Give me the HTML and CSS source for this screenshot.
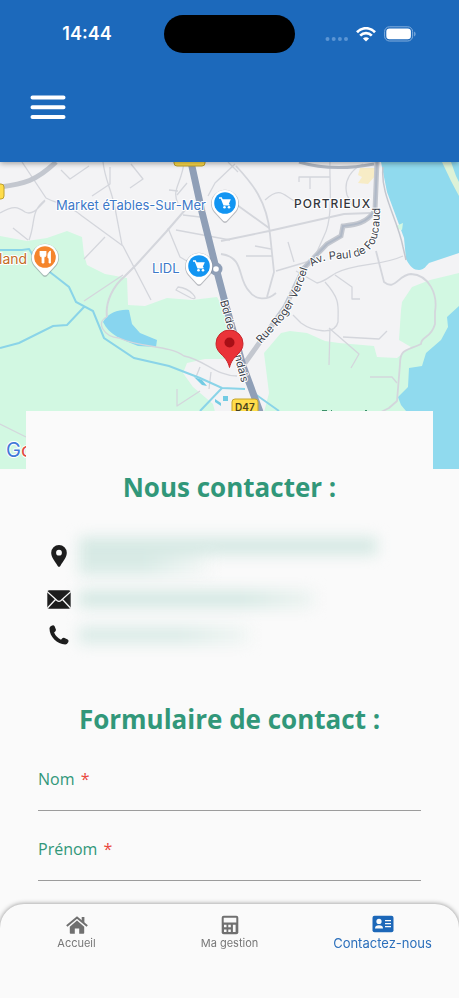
FILE: index.html
```html
<!DOCTYPE html>
<html lang="fr">
<head>
<meta charset="utf-8">
<meta name="viewport" content="width=device-width, initial-scale=1">
<title>Contactez-nous</title>
<link rel="stylesheet" href="styles.css">
</head>
<body>
<header class="header">
  <div class="status">
    <span class="time">14:44</span>
    <span class="island"></span>
    <span class="status-icons">
      <svg width="24" height="6" viewBox="0 0 24 6" fill="#5b95d4" aria-hidden="true"><circle cx="2.500" cy="3" r="2"/><circle cx="8.700" cy="3" r="2"/><circle cx="14.900" cy="3" r="2"/><circle cx="21" cy="3" r="2"/></svg>
      <svg class="wifi" width="20" height="15" viewBox="0 0 20 15" fill="none" stroke="#fff" stroke-width="2.700" aria-hidden="true"><path d="M1 5.200C6-.1 14-.1 19 5.200"/><path d="M4.200 8.600C7.500 5.300 12.500 5.300 15.800 8.600"/><path d="M10 14.600 6.900 11.400C8.600 9.800 11.400 9.800 13.100 11.400Z" fill="#fff" stroke="none"/></svg>
      <svg width="32" height="16" viewBox="0 0 32 16" aria-hidden="true"><rect x=".6" y=".8" width="28" height="14.200" rx="4.800" fill="none" stroke="#82aedd"/><rect x="2.300" y="2.500" width="24.600" height="10.800" rx="3.300" fill="#fff"/><path d="M30.200 5.500v5c1.800-.8 1.800-4.200 0-5Z" fill="#82aedd"/></svg>
    </span>
  </div>
  <button class="menu" type="button" aria-label="Menu">
    <svg width="36" height="26" viewBox="0 0 36 26" stroke="#fff" stroke-width="4" stroke-linecap="round"><path d="M2.500 3.500h31M2.500 13.200h31M2.500 23h31"/></svg>
  </button>
</header>

<main>
  <svg class="map" viewBox="0 162 459 307" preserveAspectRatio="xMidYMid slice" role="img" aria-label="Carte">
    <defs>
      <path id="p-bd" d="M220 301 Q227 326 232 346 T245 396"/>
      <path id="p-vercel" d="M261 344 L281 322 Q298 302 309 264"/>
      <path id="p-foucaud" d="M312 267 C325 256 344 261 359 256 C376 249 380 238 380 206"/>
      <g id="badge">
        <path d="M0 20Q-1.500 20-3 18L-9 11.500A14 14 0 1 1 9 11.500L3 18Q1.500 20 0 20Z" fill="#70767e" opacity=".45"/>
        <path d="M0 18.500Q-1.500 18.500-3 16.500L-8.500 10.500A13.300 13.300 0 1 1 8.500 10.500L3 16.500Q1.500 18.500 0 18.500Z" fill="#fff"/>
      </g>
      <g id="cart" fill="none" stroke="#fff" stroke-width="1.500">
        <circle r="10.800" fill="#1295f2" stroke="none"/>
        <path d="M-6-5h2.300l2.700 6.700h5.500"/><path d="M-3.300-3.800H5.800L3.800 1H-1.300Z" fill="#fff" stroke="none"/>
        <circle cx="-.5" cy="4.200" r="1.300" fill="#fff" stroke="none"/><circle cx="4" cy="4.200" r="1.300" fill="#fff" stroke="none"/>
      </g>
    </defs>
    <rect y="162" width="459" height="307" fill="#f3f3f5"/>
    <g fill="#d2f8e2">
      <path d="M0 236 27 241 47 238 67 231 82 237 84 255 87 265 105 274 127 278 128 305 145 306 167 298 192 300 217 297 223 308 231 340 231 359 205 359 187 363 183 373 193 387 213 404 215 412V469H0Z"/>
      <path d="M281 333 290 331 307 333 325 341 339 343 374 346 377 357 397 358 411 347 399 340 401 310 402 302 412 287 430 280 459 273V420H262L269 393 264 353Z"/>
    </g>
    <path d="M360 168h16v7l-8 9-10-1 4-6-4-2z" fill="#f7ecc6"/>
    <g fill="#90daee">
      <path d="M381 162 387 192 404 238 406 259C410 267 414 270 419 270 424 270 426 266 429 263L459 253V162Z"/>
      <path d="M459 306 447 317 448 327 441 340 426 353 422 366 409 368 408 387 398 397 401 405 406 411V469H459Z"/>
      <path d="M103 322C108 312 121 309 129 310L132 324 140 333 157 340 156 347 138 346C123 340 109 335 103 322Z" fill="#88d5ef"/>
    </g>
    <path d="M442 162h9l5 14 3 6v14l-8-15z" fill="#ddf2d7"/><path d="M396 226l7-3-1 7-4-1z" fill="#d2f8e2"/>
    <g fill="none" stroke="#d4d6dc" stroke-width="1.300" stroke-linejoin="round">
      <path d="M22 162 46 198C57 204 67 203 82 216L123 246 151 300" />
      <path d="M103 162C105 180 111 188 115 208L122 245"/>
      <path d="M107 317C105 302 113 286 125 276L136 265 166 232 185 210" stroke-width="2"/>
      <path d="M45 200C30 212 36 222 29 240M0 213c14-8 18-6 25-1 8 4 14-5 20-11M13 228l15 12M84 301l39-26M105 237 84 259"/>
      <path d="M184 162C182 183 171 190 178 203M178 191l-9-1M187 183l-10 12M208 196l7-13 20-19M168 228l12 29 12 7M176 230l54 10M183 215l17 2M176 290l15 8c10 4 0-10-13-11Z"/>
      <path d="M236 166c16 17 31 35 34 68l4 38-7 25M237 205l32 23M221 241l48-10 75-17 26-1M221 254c24 3 16 25 28 37 6 9 18 10 27 2M276 271l34-10" stroke-width="1.800"/>
      <path d="M228 162l10 10M330 162c-1 18 4 55-6 74l-8 18M353 207l-6-12c-4-15 5-26 16-31M299 182v-5h15M310 189v-12h20M265 200c18-17 20 0 35 3M288 242l6 20M246 256h26M255 246l16 3"/>
      <path d="M376 251l8 31c11 9 14-7 27-8 18 1 27 20 24 38v12c-4 15-14 12-14 20-15 7-21 5-21 20l-3 37-8 7-8 4" stroke-width="1.800"/>
      <path d="M403 256c-21 10-47 7-67 17-6 3-10 8-19 10l-21-12M325 282c16 18 13 24 13 40-3 14-26 9-37 1l-8-8M335 275l17 12v12h8M329 328l30 26-8 14M330 328l-1 37M343 337l36 2 8-8M370 377h22l5 6"/>
      <path d="M107 317c-12 5-3 20 12 21 21 10 50 7 65 18 21 4 32 20 53 20M200 367l-4 10M211 372l-2 17M177 389v17l23-15M0 424l26 13M92 196l18-12v-17M61 170l9 9 19-13M130 188l13-9-12-15"/>
    </g>
    <g fill="none" stroke="#c3c7cf">
      <path d="M0 187c24-3 36-6 56-25" stroke-width="5"/>
      <path d="M377 162 375 210C366 225 352 225 343 226L341 236 327 244 304 268 285 307 245 363" stroke-width="5"/>
      <path d="M377 162 375 210C366 225 352 225 343 226L341 236 327 244 304 268" stroke="#b0b9c7" stroke-width="2"/>
      <path d="M299 162c20 6 44 8 75 2" stroke="#b3bac5" stroke-width="3"/>
      <path d="M383 167c-3 27 15 53 20 80l3 13" stroke-width="1.500"/>
    </g>
    <g fill="none" stroke="#8ad4e8" stroke-width="2">
      <path d="M0 250H22L29 249 38 263 55 276 69 287 76 302 93 311 104 338 134 358 169 366 200 378 222 388 245 389M84 307 67 325 53 326 19 343 0 348"/>
      <path d="M222 388l-22 23M255 394l24 17"/>
    </g>
    <path d="M194 377l8 3 5 6-5-1zM215 399l6 4v3l-6-4zM223 396h5v5h-5z" fill="#72cbe3"/>
    <path d="M191 162 202 212 216 268 226 306 243 366 260 412" fill="none" stroke="#8f9fb7" stroke-width="7"/>
    <circle cx="216" cy="269" r="6.500" fill="#8f9fb7"/><circle cx="216" cy="269" r="2.800" fill="#fff"/>
    <rect x="174" y="153" width="31" height="13" rx="3" fill="#ffdc4b" stroke="#bda02c"/>
    <rect x="-10" y="184" width="14" height="15" rx="3" fill="#ffdc4b" stroke="#bda02c"/>
    <rect x="232" y="399" width="26" height="17" rx="3" fill="#ffdc4b" stroke="#c5a52c"/>
    <path d="M322 410.500h5M331 410.500h1M365 410.500h2" stroke="#3c8f69"/>
    <g class="map-text">
      <text class="shield" x="235" y="411">D47</text>
      <text class="poi" x="56" y="210">Market éTables-Sur-Mer</text>
      <text class="poi" x="152" y="273">LIDL</text>
      <text class="food" x="-1" y="264">land</text>
      <text class="district" x="294" y="208">PORTRIEUX</text>
      <text class="road"><textPath href="#p-bd">Bd des Islandais</textPath></text>
      <text class="road"><textPath href="#p-vercel">Rue Roger Vercel</textPath></text>
      <text class="road"><textPath href="#p-foucaud">Av. Paul de Foucaud</textPath></text>
      <text class="google" x="6" y="457">G<tspan fill="#df4b3f">o</tspan></text>
    </g>
    <g transform="translate(225 203)"><use href="#badge"/><use href="#cart"/></g>
    <g transform="translate(199 266)"><use href="#badge"/><use href="#cart"/></g>
    <g transform="translate(45 257)"><use href="#badge"/><circle r="10.800" fill="#f5852c"/><path d="M-5-6v4q0 2 2 2v6h2V0q2 0 2-2v-4M-2-6v5M5-6q-3 2-2 7h1v5h1.500V-6Z" fill="#fff" stroke="#fff" stroke-width=".8"/></g>
    <path d="M229.500 367.500C228 361 225 358 221 354 217.500 350.500 216 347.500 216 343.500A13.500 13.500 0 0 1 243 343.500C243 347.500 241.500 350.500 238 354 234 358 231 361 229.500 367.500Z" fill="#ea3338" stroke="#c8252b"/>
    <circle cx="229.500" cy="342.500" r="5" fill="#a80f16"/>
  </svg>

  <div class="card">
    <section>
      <h1>Nous contacter :</h1>
      <ul class="contacts">
        <li class="address"><svg width="16" height="22" viewBox="0 0 16 22"><path fill="#1d1d1d" fill-rule="evenodd" d="M8 0a7.800 7.800 0 0 0-7.800 7.800C.2 12 3 15 6.700 21q1.300 1.700 2.600 0C13 15 15.800 12 15.800 7.800A7.800 7.800 0 0 0 8 0Zm0 4.800a2.900 2.900 0 1 1 0 5.800 2.900 2.900 0 0 1 0-5.800Z"/></svg><span class="masked"><i class="long"></i><i class="short"></i></span></li>
        <li><svg width="24" height="19" viewBox="0 0 24 19"><rect x=".3" y=".3" width="23.400" height="18.400" rx="1.800" fill="#1d1d1d"/><path d="M0 1.500 10 10.500q2 1.700 4 0L24 1.500M.5 18 8.500 9.500M23.500 18l-8-8.500" fill="none" stroke="#fafafa" stroke-width="1.300"/></svg><span class="masked"><i class="mail"></i></span></li>
        <li><svg width="20" height="20" viewBox="0 0 20 20"><path fill="#1d1d1d" d="M.5 3.300Q.6 1.400 2.600.7 4.600-.2 5.600 1.200L6.900 4.500Q7.200 6.200 5.100 7.500 6.900 11.900 12 14.700 13.600 12.400 15 12.800L18.700 14.400Q20.100 15.300 19.200 17.200 18.100 19.500 16.200 19.500C8 19.500.3 11.500.5 3.300Z"/></svg><span class="masked"><i class="phone"></i></span></li>
      </ul>
    </section>
    <section>
      <h2>Formulaire de contact :</h2>
      <form>
        <div class="field"><label for="nom">Nom <span class="required">*</span></label><input id="nom" type="text" required></div>
        <div class="field"><label for="prenom">Prénom <span class="required">*</span></label><input id="prenom" type="text" required></div>
      </form>
    </section>
  </div>
</main>

<nav class="tabs">
  <a href="#accueil"><svg width="22" height="20" viewBox="0 0 22 20" fill="#707070"><path d="M11 5.500 3.800 11.700V18q0 .8.800.8h4.200v-5.300h4.400v5.300h4.200q.8 0 .8-.8v-6.300Z"/><path d="M.8 11 11 2.500 21.200 11" fill="none" stroke="#707070" stroke-width="2"/><path d="M15.700 2h2.700v6l-2.700-2Z"/></svg><span>Accueil</span></a>
  <a href="#gestion"><svg width="18" height="20" viewBox="0 0 18 20"><rect x=".7" y=".7" width="16.600" height="18.600" rx="2" fill="#707070"/><g fill="#fafafa"><path d="M2.700 2.700h12.600v4.800H2.700zM3 9.800h2.500v2.500H3zM7.300 9.800h2.500v2.500H7.300zM3 14.400h2.500v2.500H3zM7.300 14.400h2.500v2.500H7.300zM11.900 9.800h2.700v7.100h-2.700z"/></g></svg><span>Ma gestion</span></a>
  <a class="active" href="#contact" aria-current="page"><svg width="22" height="18" viewBox="0 0 22 18"><rect x=".5" y=".7" width="21" height="16.600" rx="2" fill="#1c67b8"/><g fill="#fafafa"><circle cx="7" cy="6.400" r="2.600"/><path d="M3 13.500q0-3.300 4-3.300t4 3.300zM13 5h6v1.300h-6zM13 8h6v1.300h-6zM13 11h6v1.300h-6z"/></g></svg><span>Contactez-nous</span></a>
</nav>
</body>
</html>
```
FILE: styles.css
```css
* { box-sizing: border-box; }
body { margin: 0; background: #fafafa; font-family: "Open Sans", "Noto Sans", sans-serif; color: #319779; }
svg { display: block; flex: none; }

.header { position: relative; height: 162px; padding-top: 15px; background: #1c69bb; box-shadow: 0 1px 6px rgba(0, 0, 0, .4); }
.status { display: grid; grid-template-columns: 1fr 131px 1fr; align-items: center; color: #fff; }
.time { padding-left: 10px; text-align: center; font: 600 18px/38px Inter, sans-serif; }
.island { height: 38px; border-radius: 19px; background: #000; }
.status-icons { display: flex; justify-content: flex-end; align-items: center; padding-right: 43px; }
.status-icons svg:first-child { margin-top: 10px; }
.wifi { margin: 0 8px 0 7px; }
.menu { display: block; margin: 41px 0 0 30px; padding: 0; border: 0; background: none; }

.map { width: 100%; height: 307px; }
.map-text { font-family: Inter, sans-serif; paint-order: stroke; stroke: #fff; stroke-width: 2px; stroke-linejoin: round; }
.poi { font-size: 13px; fill: #3c78c8; }
.food { font-size: 14px; fill: #c36b24; }
.district { font-size: 12px; font-weight: 500; letter-spacing: 1px; fill: #33363b; }
.road { font-size: 11px; fill: #3d434c; }
.shield { font-size: 10px; font-weight: 600; fill: #4b431b; stroke: none; }
.google { font-size: 20px; fill: #4279d7; }

.card { position: relative; margin: -58px 26px 0; padding: 56px 12px 116px; background: #fafafa; }
h1, h2 { margin: 0; text-align: center; font-size: 26px; font-weight: 700; line-height: 40px; }
.contacts { list-style: none; margin: 24px 0 46px; padding: 0; }
.contacts li { display: grid; grid-template-columns: 41px 1fr; align-items: center; height: 36px; }
.contacts li > svg { justify-self: center; }
.contacts .address { height: 50px; }
.masked { display: block; filter: blur(7px); }
.masked i { display: block; height: 18px; background: #d6e9e4; }
.masked .long { width: 298px; max-width: 100%; }
.masked .short { width: 130px; height: 20px; background: linear-gradient(90deg, #d9ebe6 50%, #f4f7f6); }
.masked .mail { width: 235px; background: linear-gradient(90deg, #d6e9e4 70%, #eef4f2); }
.masked .phone { width: 170px; background: linear-gradient(90deg, #dcece8 60%, #f1f6f4); }

form { padding-top: 28px; }
.field { margin-bottom: 26px; }
.field label { display: block; font-size: 16px; line-height: 24px; }
.required { margin-left: 2px; color: #e9483e; }
.field input { display: block; width: 100%; height: 20px; padding: 0; border: 0; border-bottom: 1px solid #9c9c9c; border-radius: 0; background: none; font: inherit; outline: 0; }

.tabs { position: fixed; right: 0; bottom: 0; left: 0; display: grid; grid-template-columns: repeat(3, 1fr); height: 94px; padding-top: 11px; border-radius: 24px 24px 0 0; background: #fafafa; box-shadow: 0 0 5px rgba(0, 0, 0, .45); }
.tabs a { display: flex; flex-direction: column; align-items: center; height: 36px; justify-content: space-between; color: #777; text-decoration: none; font: 400 11px/16px Inter, sans-serif; }
.tabs .active { color: #2b6fbb; font-size: 13px; }
```
